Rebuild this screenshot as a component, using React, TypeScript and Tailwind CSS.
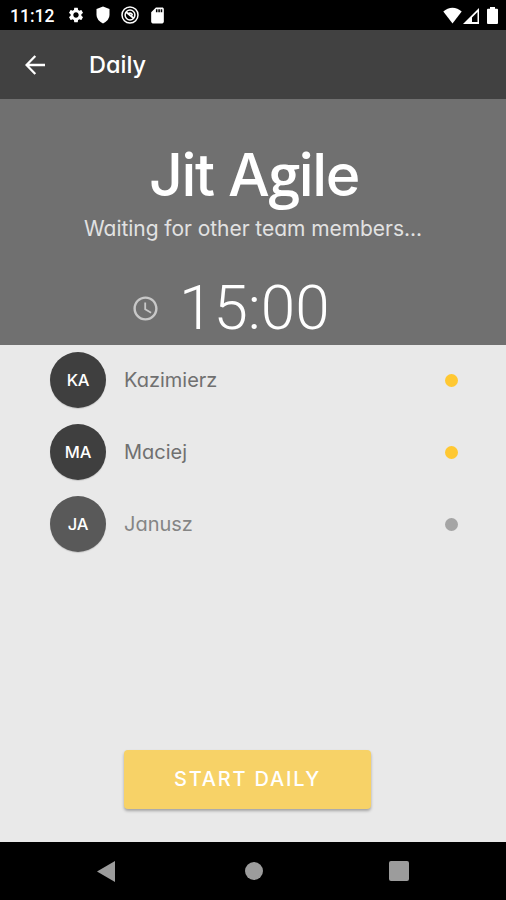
import { MdAccessTime, MdSettings, MdSdCard } from "react-icons/md";

type Member = {
  initials: string;
  name: string;
  ready: boolean;
};

const members: Member[] = [
  { initials: "KA", name: "Kazimierz", ready: true },
  { initials: "MA", name: "Maciej", ready: true },
  { initials: "JA", name: "Janusz", ready: false },
];

function StatusBar() {
  return (
    <div className="flex h-[30px] shrink-0 items-center bg-black pl-[10px] pr-[8px] text-white">
      <span className="w-[57px] pt-[3px] font-['Roboto',sans-serif] text-[17.5px] leading-none font-medium whitespace-nowrap">
        11:12
      </span>
      <MdSettings className="size-[18px]" />
      <svg viewBox="0 0 18 18" className="ml-[9px] size-[18px]" fill="currentColor">
        <path d="M9 .5 15.500 3v6q0 5-6.500 8.500Q2.500 14 2.500 9V3z" />
      </svg>
      <svg viewBox="0 0 18 18" className="ml-[9px] size-[18px]" fill="none" stroke="currentColor">
        <circle cx="9" cy="9" r="8" strokeWidth="1.5" />
        <circle cx="9" cy="9" r="4.9" strokeWidth="1.5" />
        <path d="M5 6l8 6.500M7 7.500q3.500-1.500 4.500 2" strokeWidth="1.700" />
      </svg>
      <MdSdCard className="ml-[9px] size-[19px]" />
      <svg viewBox="0 0 19 17" className="ml-auto h-[17px] w-[19px]" fill="currentColor">
        <path d="M9.500 16.500.3 4.600C5.500-.6 13.500-.6 18.700 4.600z" />
      </svg>
      <svg viewBox="0 0 17 17" className="ml-[1px] h-[17px] w-[17px]" fill="currentColor">
        <path fillRule="evenodd" d="M16 1v16H0zM14.500 5 9 10.500v4.500h5.500z" />
      </svg>
      <svg viewBox="0 0 11 17" className="ml-[7px] h-[17px] w-[11px]" fill="currentColor">
        <path d="M3 0h5v1.700h2q1 0 1 1V16q0 1-1 1H1q-1 0-1-1V2.700q0-1 1-1h2z" />
      </svg>
    </div>
  );
}

function MemberRow({ initials, name, ready }: Member) {
  return (
    <li className="flex h-[72px] items-center pl-[50px] pr-[48px]">
      <span
        className={`flex size-[56px] items-center justify-center rounded-full text-[16.5px] font-medium tracking-[-0.2px] text-white shadow-[0_1px_1px_rgba(0,0,0,0.15)] ${ready ? "bg-[#3f3f3f]" : "bg-[#595959]"}`}
      >
        {initials}
      </span>
      <span className={`ml-[18px] text-[20px] ${ready ? "text-[#707070]" : "text-[#858585]"}`}>
        {name}
      </span>
      <span className={`ml-auto size-[13px] rounded-full ${ready ? "bg-[#ffc832]" : "bg-[#a5a5a5]"}`} />
    </li>
  );
}

function App() {
  return (
    <div className="flex h-[900px] w-[506px] flex-col overflow-hidden bg-[#e9e9e9] font-['Inter',sans-serif] [font-feature-settings:'cv11']">
      <StatusBar />

      <header className="flex h-[69px] shrink-0 items-center bg-[#414141] pl-[25px] text-white">
        <svg viewBox="0 0 20 20" className="size-[20px]" fill="none" stroke="currentColor" strokeWidth="2.3">
          <path d="M20 10H2M10.300 1 1.500 10l8.800 9" />
        </svg>
        <h1 className="ml-[44px] text-[23.5px] font-medium">Daily</h1>
      </header>

      <section className="flex h-[246px] shrink-0 flex-col items-center bg-[#707070]">
        <h2 className="mt-[44px] h-[64px] pl-[2px] text-[59px] leading-[64px] font-medium tracking-[-1.4px] text-white">
          Jit A<span className="font-['Open_Sans',sans-serif] text-[57px] leading-none font-semibold">g</span>ile
        </h2>
        <p className="mt-[9px] text-[21px] leading-[26px] tracking-[-0.05px] text-[#e2e2e2]">
          Waiting for other team members...
        </p>
        <div className="mt-[33px] flex items-center self-start pl-[131px]">
          <MdAccessTime className="size-[29px] text-[#c8c8c8]" />
          <span className="ml-[19px] font-['Roboto',sans-serif] text-[62px] leading-[66px] font-light text-white">
            15:00
          </span>
        </div>
      </section>

      <ul className="-mt-px flex flex-col">
        {members.map((member) => (
          <MemberRow key={member.initials} {...member} />
        ))}
      </ul>

      <button className="mt-auto mb-[33px] ml-[124px] h-[59px] w-[247px] shrink-0 rounded-[4px] bg-[#f7d267] pb-[2px] text-[20px] font-medium tracking-[1.8px] text-white shadow-[0_2px_3px_rgba(0,0,0,0.3)]">
        START DAILY
      </button>

      <nav className="flex h-[58px] shrink-0 items-center bg-black pl-[97px] text-[#9c9c9c]">
        <svg viewBox="0 0 18 21" className="h-[21px] w-[18px]" fill="currentColor">
          <path d="M18 0v21L0 10.500z" />
        </svg>
        <span className="ml-[130px] size-[18px] rounded-full bg-[#9c9c9c]" />
        <span className="ml-[126px] size-[20px] rounded-[2px] bg-[#9c9c9c]" />
      </nav>
    </div>
  );
}

export default App;
